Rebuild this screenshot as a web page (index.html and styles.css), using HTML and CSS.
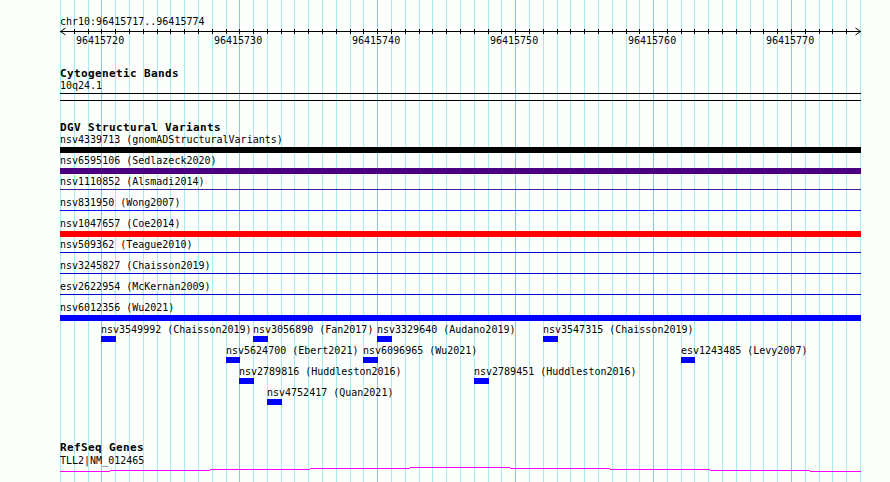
FILE: index.html
```html
<!DOCTYPE html>
<html lang="en">
<head>
    <meta charset="UTF-8">
    <meta name="viewport" content="width=device-width, initial-scale=1.0">
    <title>chr10:96415717-96415774</title>
    <link rel="stylesheet" href="styles.css">
</head>
<body>
    <div class="browser" id="browser" data-start="96415717" data-end="96415774">
        <svg class="guides" id="guides" width="890" height="482"></svg>

        <div class="ruler">
            <div class="position">chr10:96415717..96415774</div>
            <svg class="axis" id="axis" width="801" height="8">
                <polyline class="arrow" points="5.5,1 0.5,4.5 5.5,8"/>
                <polyline class="arrow" points="795.5,1 800.5,4.5 795.5,8"/>
            </svg>
            <div class="tick-labels">
                <span class="tick-label" style="left:16px">96415720</span>
                <span class="tick-label" style="left:154px">96415730</span>
                <span class="tick-label" style="left:292px">96415740</span>
                <span class="tick-label" style="left:430px">96415750</span>
                <span class="tick-label" style="left:568px">96415760</span>
                <span class="tick-label" style="left:706px">96415770</span>
            </div>
        </div>

        <section class="track cyto">
            <h2 class="track-title">Cytogenetic Bands</h2>
            <div class="item-label">10q24.1</div>
            <div class="band"></div>
        </section>

        <section class="track dgv">
            <h2 class="track-title">DGV Structural Variants</h2>

            <div class="sv-row">
                <div class="item-label">nsv4339713 (gnomADStructuralVariants)</div>
                <div class="lane"><div class="sv-bar black"></div></div>
            </div>
            <div class="sv-row">
                <div class="item-label">nsv6595106 (Sedlazeck2020)</div>
                <div class="lane"><div class="sv-bar purple"></div></div>
            </div>
            <div class="sv-row">
                <div class="item-label">nsv1110852 (Alsmadi2014)</div>
                <div class="lane"><div class="sv-line violet"></div></div>
            </div>
            <div class="sv-row">
                <div class="item-label">nsv831950 (Wong2007)</div>
                <div class="lane"><div class="sv-line bright-blue"></div></div>
            </div>
            <div class="sv-row">
                <div class="item-label">nsv1047657 (Coe2014)</div>
                <div class="lane"><div class="sv-bar red"></div></div>
            </div>
            <div class="sv-row">
                <div class="item-label">nsv509362 (Teague2010)</div>
                <div class="lane"><div class="sv-line dark-blue"></div></div>
            </div>
            <div class="sv-row">
                <div class="item-label">nsv3245827 (Chaisson2019)</div>
                <div class="lane"><div class="sv-line dark-blue"></div></div>
            </div>
            <div class="sv-row">
                <div class="item-label">esv2622954 (McKernan2009)</div>
                <div class="lane"><div class="sv-line dark-blue"></div></div>
            </div>
            <div class="sv-row">
                <div class="item-label">nsv6012356 (Wu2021)</div>
                <div class="lane"><div class="sv-bar blue"></div></div>
            </div>

            <!-- packed items, left = base position in pixels -->
            <div class="pack-row">
                <div class="feature" style="left:41px">
                    <span class="feature-name">nsv3549992 (Chaisson2019)</span>
                    <span class="feature-bar" style="width:15px"></span>
                </div>
                <div class="feature" style="left:193px">
                    <span class="feature-name">nsv3056890 (Fan2017)</span>
                    <span class="feature-bar" style="width:15px"></span>
                </div>
                <div class="feature" style="left:317px">
                    <span class="feature-name">nsv3329640 (Audano2019)</span>
                    <span class="feature-bar" style="width:15px"></span>
                </div>
                <div class="feature" style="left:483px">
                    <span class="feature-name">nsv3547315 (Chaisson2019)</span>
                    <span class="feature-bar" style="width:15px"></span>
                </div>
            </div>
            <div class="pack-row">
                <div class="feature" style="left:166px">
                    <span class="feature-name">nsv5624700 (Ebert2021)</span>
                    <span class="feature-bar" style="width:14px"></span>
                </div>
                <div class="feature" style="left:303px">
                    <span class="feature-name">nsv6096965 (Wu2021)</span>
                    <span class="feature-bar" style="width:15px"></span>
                </div>
                <div class="feature" style="left:621px">
                    <span class="feature-name">esv1243485 (Levy2007)</span>
                    <span class="feature-bar" style="width:14px"></span>
                </div>
            </div>
            <div class="pack-row">
                <div class="feature" style="left:179px">
                    <span class="feature-name">nsv2789816 (Huddleston2016)</span>
                    <span class="feature-bar" style="width:15px"></span>
                </div>
                <div class="feature" style="left:414px">
                    <span class="feature-name">nsv2789451 (Huddleston2016)</span>
                    <span class="feature-bar" style="width:15px"></span>
                </div>
            </div>
            <div class="pack-row">
                <div class="feature" style="left:207px">
                    <span class="feature-name">nsv4752417 (Quan2021)</span>
                    <span class="feature-bar" style="width:15px"></span>
                </div>
            </div>
        </section>

        <section class="track refseq">
            <h2 class="track-title">RefSeq Genes</h2>
            <div class="item-label gene-label">TLL2|NM_012465</div>
            <svg class="gene" width="801" height="8">
                <rect x="0" y="5" width="50" height="1"/>
                <rect x="50" y="4" width="100" height="1"/>
                <rect x="150" y="3" width="100" height="1"/>
                <rect x="250" y="2" width="100" height="1"/>
                <rect x="350" y="1" width="100" height="1"/>
                <rect x="450" y="2" width="100" height="1"/>
                <rect x="550" y="3" width="100" height="1"/>
                <rect x="650" y="4" width="100" height="1"/>
                <rect x="750" y="5" width="51" height="1"/>
            </svg>
        </section>
    </div>

    <script src="script.js"></script>
</body>
</html>
```

FILE: styles.css
```css
body {
    margin: 0;
    background-color: #fcfffc;
    font-family: 'DejaVu Sans Mono', monospace;
    font-size: 10px;
    color: #000;
}

.browser {
    position: relative;
    z-index: 0;
    width: 890px;
    height: 482px;
    overflow: hidden;
}

/* vertical base guides sit behind every track */
.guides {
    position: absolute;
    top: 0;
    left: 0;
    z-index: -1;
}

.guide {
    stroke: #a8ecf0;
    stroke-width: 1;
    shape-rendering: crispEdges;
}

.guide.major {
    stroke: #8cc6ea;
}

.ruler {
    padding: 16px 0 0 60px;
}

.position {
    height: 11px;
    line-height: 11px;
    white-space: nowrap;
}

.axis {
    display: block;
    overflow: visible;
}

.axis-line,
.axis-tick {
    stroke: #000;
    stroke-width: 1;
    shape-rendering: crispEdges;
}

.arrow {
    fill: none;
    stroke: #000;
    stroke-width: 1;
}

.tick-labels {
    position: relative;
    height: 11px;
}

.tick-label {
    position: absolute;
    top: 0;
    line-height: 11px;
    white-space: nowrap;
}

.track {
    width: 801px;
    padding-left: 60px;
}

.track-title {
    margin: 0;
    height: 12px;
    font-size: 11px;
    font-weight: bold;
    letter-spacing: 0.38px;
    line-height: 12px;
    white-space: nowrap;
}

.item-label {
    height: 11px;
    line-height: 11px;
    white-space: nowrap;
}

.cyto {
    margin-top: 22px;
}

.band {
    height: 6px;
    margin-top: 2px;
    border-top: 1px solid #000;
    border-bottom: 1px solid #000;
}

.dgv {
    margin-top: 21px;
}

.sv-row {
    height: 21px;
}

.lane {
    height: 6px;
    margin-top: 2px;
}

.sv-bar {
    height: 6px;
}

.sv-line {
    height: 1px;
    margin-top: 2px;
}

.black { background-color: #000; }
.purple { background-color: #4b0082; }
.violet { background-color: #3e1e9c; }
.bright-blue { background-color: #0a14ff; }
.red { background-color: #ff0000; }
.dark-blue { background-color: #0000d0; }
.blue { background-color: #0000ff; }

.pack-row {
    position: relative;
    height: 21px;
}

.feature {
    position: absolute;
    top: 0;
    display: flex;
    flex-direction: column;
    align-items: flex-start;
}

.feature-name {
    padding-top: 1px;
    line-height: 11px;
    white-space: nowrap;
}

.feature-bar {
    display: block;
    height: 6px;
    margin-top: 1px;
    background-color: #0000ff;
}

.refseq {
    margin-top: 35px;
}

.gene-label {
    margin-top: 1px;
}

.gene {
    display: block;
    fill: #ff00ff;
    shape-rendering: crispEdges;
}
```

FILE: script.js
```js
// draw base guides and ruler ticks from the window coordinates
const browser = document.getElementById('browser');
const start = Number(browser.dataset.start);
const end = Number(browser.dataset.end);
const bases = end - start + 1;
const trackLeft = 60;
const trackWidth = 800;
const svgNS = 'http://www.w3.org/2000/svg';

function baseX(i) {
    return Math.round(i * trackWidth / bases);
}

function addLine(svg, x1, y1, x2, y2, cls) {
    const line = document.createElementNS(svgNS, 'line');
    line.setAttribute('x1', x1);
    line.setAttribute('y1', y1);
    line.setAttribute('x2', x2);
    line.setAttribute('y2', y2);
    line.setAttribute('class', cls);
    svg.appendChild(line);
}

const guides = document.getElementById('guides');
for (let i = 0; i <= bases; i++) {
    const x = trackLeft + baseX(i) + 0.5;
    const cls = (start + i) % 10 === 0 ? 'guide major' : 'guide';
    addLine(guides, x, 0, x, 482, cls);
}

const axis = document.getElementById('axis');
addLine(axis, 0, 4.5, trackWidth + 1, 4.5, 'axis-line');
for (let i = 1; i < bases; i++) {
    const x = baseX(i) + 0.5;
    addLine(axis, x, 2, x, 7, 'axis-tick');
}
```
